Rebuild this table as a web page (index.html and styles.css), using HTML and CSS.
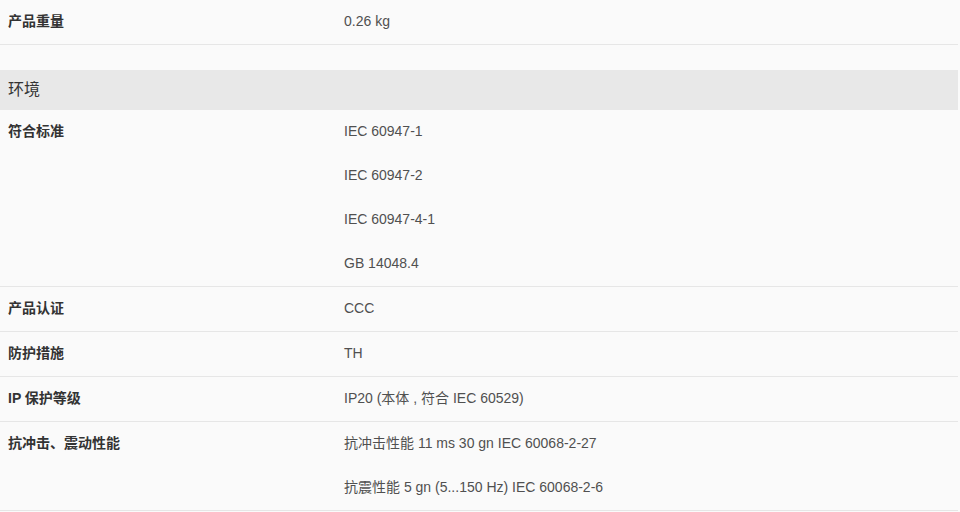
FILE: index.html
```html
<!DOCTYPE html>
<html lang="zh-CN">
<head>
<meta charset="utf-8">
<title>产品规格</title>
<link rel="stylesheet" href="styles.css">
</head>
<body>
<div class="spec">
  <div class="row">
    <div class="label">产品重量</div>
    <div class="value"><div class="line">0.26 kg</div></div>
  </div>

  <div class="group">环境</div>

  <div class="row">
    <div class="label">符合标准</div>
    <div class="value">
      <div class="line">IEC 60947-1</div>
      <div class="line">IEC 60947-2</div>
      <div class="line">IEC 60947-4-1</div>
      <div class="line">GB 14048.4</div>
    </div>
  </div>
  <div class="row">
    <div class="label">产品认证</div>
    <div class="value"><div class="line">CCC</div></div>
  </div>
  <div class="row">
    <div class="label">防护措施</div>
    <div class="value"><div class="line">TH</div></div>
  </div>
  <div class="row">
    <div class="label">IP 保护等级</div>
    <div class="value"><div class="line">IP20 (本体 , 符合 IEC 60529)</div></div>
  </div>
  <div class="row">
    <div class="label">抗冲击、震动性能</div>
    <div class="value">
      <div class="line">抗冲击性能 11 ms 30 gn IEC 60068-2-27</div>
      <div class="line">抗震性能 5 gn (5...150 Hz) IEC 60068-2-6</div>
    </div>
  </div>
</div>
</body>
</html>
```
FILE: styles.css
```css
html, body {
  margin: 0;
  padding: 0;
  background: #fafafa;
}
body {
  font-family: "Liberation Sans", Arial, "Noto Sans CJK SC", sans-serif;
  font-size: 14px;
  color: #333;
}
.spec {
  width: 958px;
}
.row {
  display: grid;
  grid-template-columns: 344px 1fr;
  border-bottom: 1px solid #e6e6e6;
}
.label {
  padding-left: 8px;
  line-height: 42px;
  font-weight: bold;
  color: #333;
}
.value {
  display: flex;
  flex-direction: column;
}
.line {
  line-height: 42px;
  height: 44px;
  color: #505050;
}
.group {
  margin-top: 25px;
  height: 40px;
  line-height: 40px;
  padding-left: 8px;
  background: #e8e8e8;
  font-size: 16px;
  color: #333;
}
```
